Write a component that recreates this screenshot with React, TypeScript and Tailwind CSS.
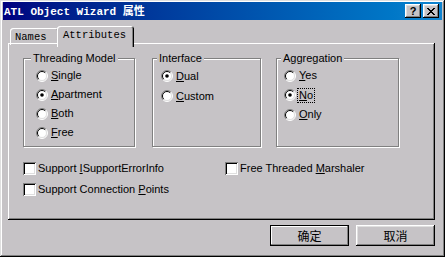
import React from "react";

const sans = { fontFamily: '"Liberation Sans", Arial, sans-serif' };

const Radio = ({ checked }: { checked?: boolean }) => (
  <svg width="12" height="12" viewBox="0 0 12 12" className="shrink-0">
    <circle cx="6" cy="6" r="5" fill="#fff" />
    <path d="M9.9 2.1 A5.5 5.5 0 0 0 2.1 9.9" stroke="#808080" fill="none" />
    <path d="M2.1 9.9 A5.5 5.5 0 0 0 9.9 2.1" stroke="#fff" fill="none" />
    <path d="M9.2 2.8 A4.5 4.5 0 0 0 2.8 9.2" stroke="#000" fill="none" />
    <path d="M2.8 9.2 A4.5 4.5 0 0 0 9.2 2.8" stroke="#dfdfdf" fill="none" />
    {checked && <circle cx="6" cy="6" r="1.8" fill="#000" />}
  </svg>
);

const Check = () => (
  <div className="w-[13px] h-[13px] shrink-0 bg-white shadow-[inset_1px_1px_0_#808080,inset_-1px_-1px_0_#fff,inset_2px_2px_0_#000,inset_-2px_-2px_0_#dfdfdf]" />
);

const Key = ({ children }: { children: React.ReactNode }) => (
  <u className="underline decoration-1 underline-offset-[1px]">{children}</u>
);

type Item = { key: string; rest: string; checked?: boolean; focus?: boolean };

const Group = ({
  title,
  items,
  width,
  labelLeft,
  padLeft,
  rowH,
}: {
  title: string;
  items: Item[];
  width: string;
  labelLeft: string;
  padLeft: string;
  rowH: string;
}) => (
  <div
    className={`relative h-[89px] border border-[#808080] shadow-[inset_1px_1px_0_#fff,1px_1px_0_#fff] pt-[7px] ${width} ${padLeft}`}
  >
    <span className={`absolute top-[-7px] ${labelLeft} bg-[#c6c3c6] px-[2px] text-[11px] leading-[13px]`}>
      {title}
    </span>
    <div className="flex flex-col">
      {items.map((it) => (
        <div key={it.rest + it.key} className={`flex items-center gap-[2px] ${rowH}`}>
          <Radio checked={it.checked} />
          <span
            className={`text-[11px] leading-[13px] px-[1px] ${
              it.focus ? "outline outline-1 outline-dotted outline-black" : ""
            }`}
          >
            <Key>{it.key}</Key>
            {it.rest}
          </span>
        </div>
      ))}
    </div>
  </div>
);

const Button = ({ label, primary }: { label: string; primary?: boolean }) => (
  <div
    className={`w-[79px] h-[21px] flex items-center justify-center text-[12px] ${
      primary
        ? "shadow-[inset_0_0_0_1px_#000,inset_-2px_-2px_0_#808080,inset_2px_2px_0_#fff]"
        : "shadow-[inset_-1px_-1px_0_#000,inset_1px_1px_0_#fff,inset_-2px_-2px_0_#808080,inset_2px_2px_0_#dfdfdf]"
    }`}
    style={{ fontFamily: '"Noto Sans CJK SC", sans-serif' }}
  >
    {label}
  </div>
);

export default function App() {
  return (
    <div
      className="w-[445px] h-[257px] bg-[#c6c3c6] px-[3px] pt-[2px] text-black flex flex-col shadow-[inset_-1px_-1px_0_#000,inset_1px_1px_0_#dfdfdf,inset_-2px_-2px_0_#808080,inset_2px_2px_0_#fff]"
      style={sans}
    >
      {/* title bar */}
      <div className="h-[18px] flex items-center justify-between pl-[1px] pr-[3px] bg-gradient-to-r from-[#000080] to-[#1084d0]">
        <span
          className="text-white text-[11px] font-bold leading-none pt-[2px]"
          style={{ fontFamily: '"Liberation Mono", "Noto Sans CJK SC", monospace' }}
        >
          ATL Object Wizard 属性
        </span>
        <div className="flex gap-[2px]">
          <div className="w-[16px] h-[14px] flex items-center justify-center text-[11px] font-bold leading-none shadow-[inset_-1px_-1px_0_#000,inset_1px_1px_0_#fff,inset_-2px_-2px_0_#808080,inset_2px_2px_0_#dfdfdf] bg-[#c6c3c6]">
            ?
          </div>
          <div className="w-[16px] h-[14px] flex items-center justify-center shadow-[inset_-1px_-1px_0_#000,inset_1px_1px_0_#fff,inset_-2px_-2px_0_#808080,inset_2px_2px_0_#dfdfdf] bg-[#c6c3c6]">
            <svg width="8" height="7" viewBox="0 0 8 7">
              <path d="M0 0h2v1h1v1h2V1h1V0h2v1H7v1H6v1H5v1h1v1h1v1h1v1H6V6H5V5H3v1H2v1H0V6h1V5h1V4h1V3H2V2H1V1H0z" fill="#000" />
            </svg>
          </div>
        </div>
      </div>

      {/* tabs */}
      <div className="mt-[6px] ml-[5px] flex items-end pl-[2px] mb-[-2px]">
        <div
          className="w-[49px] h-[17px] flex items-center pl-[5px] pt-[3px] text-[10.5px] rounded-t-[3px] shadow-[inset_1px_1px_0_#fff,inset_-1px_0_0_#000,inset_-2px_0_0_#808080]"
          style={{ fontFamily: '"Liberation Mono", monospace' }}
        >
          Names
        </div>
        <div
          className="relative z-10 ml-[-2px] w-[77px] h-[21px] mb-[-2px] flex items-center pl-[6px] pb-[2px] text-[10.5px] bg-[#c6c3c6] rounded-t-[3px] shadow-[inset_1px_1px_0_#fff,inset_-1px_0_0_#000,inset_-2px_0_0_#808080]"
          style={{ fontFamily: '"Liberation Mono", monospace' }}
        >
          Attributes
        </div>
      </div>

      {/* panel */}
      <div className="ml-[5px] w-[427px] h-[177px] pt-[15px] pl-[15px] shadow-[inset_-1px_-1px_0_#000,inset_1px_1px_0_#fff,inset_-2px_-2px_0_#808080]">
        <div className="flex">
          <Group
            title="Threading Model"
            width="w-[112px]"
            labelLeft="left-[7px]"
            padLeft="pl-[12px]"
            rowH="h-[19px]"
            items={[
              { key: "S", rest: "ingle" },
              { key: "A", rest: "partment", checked: true },
              { key: "B", rest: "oth" },
              { key: "F", rest: "ree" },
            ]}
          />
          <div className="ml-[17px]">
            <Group
              title="Interface"
              width="w-[109px]"
              labelLeft="left-[4px]"
              padLeft="pl-[8px]"
              rowH="h-[20px]"
              items={[
                { key: "D", rest: "ual", checked: true },
                { key: "C", rest: "ustom" },
              ]}
            />
          </div>
          <div className="ml-[15px]">
            <Group
              title="Aggregation"
              width="w-[123px]"
              labelLeft="left-[4px]"
              padLeft="pl-[7px]"
              rowH="h-[19.5px]"
              items={[
                { key: "Y", rest: "es" },
                { key: "N", rest: "o", checked: true, focus: true },
                { key: "O", rest: "nly" },
              ]}
            />
          </div>
        </div>

        <div className="mt-[15px] grid grid-cols-[202px_1fr] gap-y-[8px] text-[11px] leading-[13px]">
          <div className="flex items-center gap-[2px]">
            <Check />
            <span>
              Support <Key>I</Key>SupportErrorInfo
            </span>
          </div>
          <div className="flex items-center gap-[2px]">
            <Check />
            <span>
              Free Threaded <Key>M</Key>arshaler
            </span>
          </div>
          <div className="flex items-center gap-[2px]">
            <Check />
            <span>
              Support Connection <Key>P</Key>oints
            </span>
          </div>
        </div>
      </div>

      {/* buttons */}
      <div className="mt-[5px] ml-[5px] w-[427px] flex justify-end gap-[7px]">
        <Button label="确定" primary />
        <Button label="取消" />
      </div>
    </div>
  );
}
